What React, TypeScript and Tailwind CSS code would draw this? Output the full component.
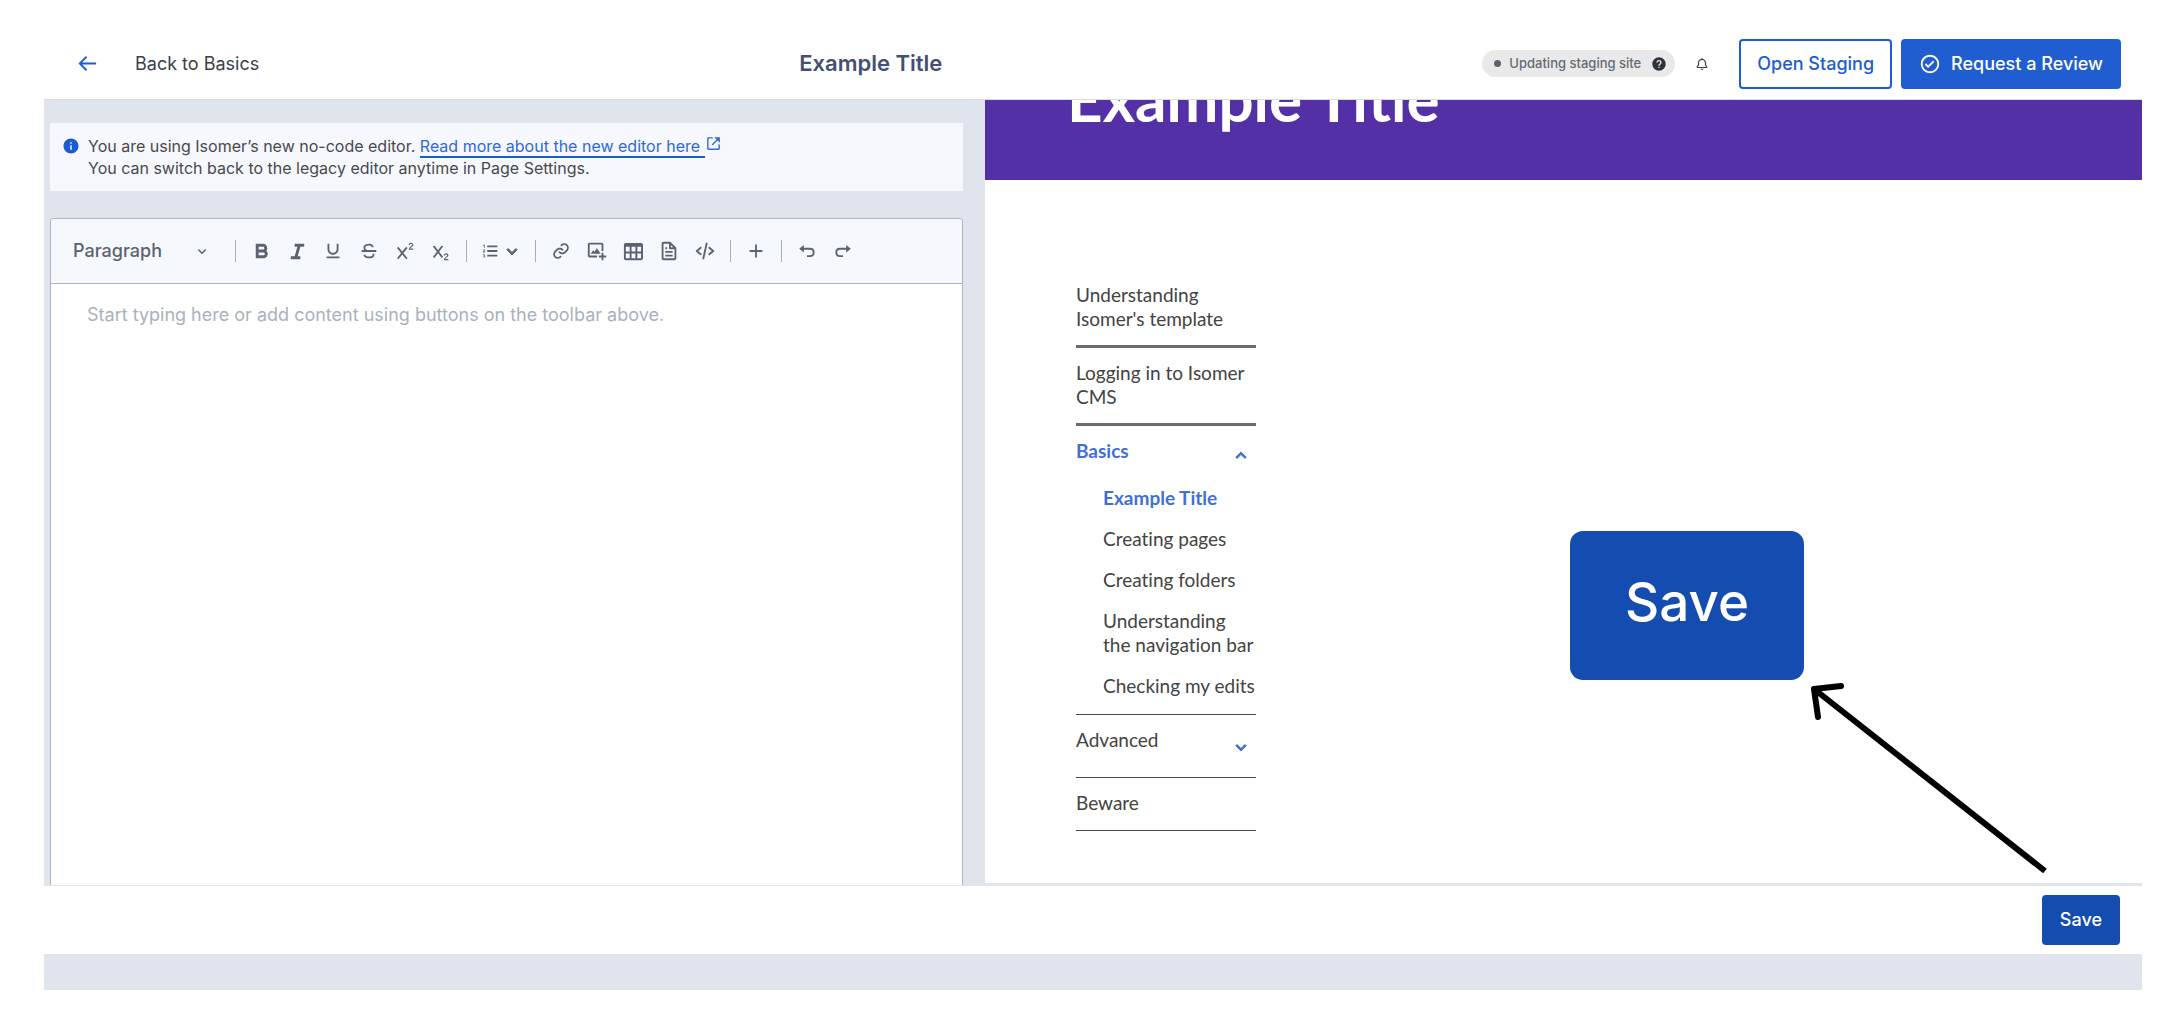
import type { ReactNode } from "react";
import {
  BiArrowBack,
  BiBell,
  BiBold,
  BiCheckCircle,
  BiChevronDown,
  BiChevronUp,
  BiCodeAlt,
  BiFile,
  BiImageAdd,
  BiItalic,
  BiLink,
  BiLinkExternal,
  BiListOl,
  BiPlus,
  BiSolidHelpCircle,
  BiSolidInfoCircle,
  BiStrikethrough,
  BiTable,
  BiUnderline,
} from "react-icons/bi";

function ScriptIcon({ raised }: { raised: boolean }) {
  return (
    <svg viewBox="0 0 24 24" className="size-[22px]" fill="none" stroke="currentColor">
      <path d={raised ? "M4 8l10 12.500M14 8L4 20.500" : "M4 6.500l9.500 12.500M13.500 6.500L4 19"} strokeWidth="2" />
      <path
        d={
          raised
            ? "M16.500 5.500c0-2.500 4-2.500 4-.3C20.500 7 16.800 7.500 16.800 10H21"
            : "M15.500 17c0-2.500 4-2.500 4-.3C19.500 18.500 15.800 19 15.800 21.500H20"
        }
        strokeWidth="1.300"
      />
    </svg>
  );
}

function HistoryIcon({ forward }: { forward: boolean }) {
  return (
    <svg viewBox="0 0 24 24" className="size-[22px]" fill="none" stroke="currentColor">
      <path
        d={
          forward
            ? "M17 9.500H8.500C3.500 9.500 3.500 17.500 8.500 17.500H12"
            : "M7 9.500h8.500C20.500 9.500 20.500 17.500 15.500 17.500H12"
        }
        strokeWidth="2"
      />
      <path
        d={forward ? "M20.500 9.500L15.500 5.500v8z" : "M3.500 9.500L8.500 5.500v8z"}
        fill="currentColor"
        stroke="none"
      />
    </svg>
  );
}

function Tool({ label, children }: { label: string; children: ReactNode }) {
  return (
    <button type="button" aria-label={label} className="flex h-9 w-9 items-center justify-center">
      {children}
    </button>
  );
}

function Divider() {
  return <div className="mx-[7px] h-[22px] w-px bg-[#a9aeb9]" />;
}

function Header() {
  return (
    <header className="flex h-[72px] items-center justify-between border-b border-[#dcdce0] pr-[21px] pl-8">
      <div className="flex items-center gap-9">
        <button type="button" aria-label="Go back" className="text-[#1b5dd1]">
          <BiArrowBack className="size-[23px]" />
        </button>
        <span className="text-lg text-[#3c3f48]">Back to Basics</span>
      </div>
      <h1 className="text-[22px] font-semibold text-[#445072]">Example Title</h1>
      <div className="flex items-center">
        <div className="flex h-[27px] items-center rounded-full bg-[#e9e9e9] pr-2 pl-3 text-[13px] font-medium text-[#636a76]">
          <span className="mr-2 size-[7px] rounded-full bg-[#5d6470]" />
          Updating staging site
          <BiSolidHelpCircle className="ml-2.5 size-4 text-[#2f333b]" />
        </div>
        <button type="button" aria-label="Notifications" className="ml-5 mr-[30px] text-[#3c3f48]">
          <BiBell className="size-3.5" />
        </button>
        <button
          type="button"
          className="h-[50px] rounded border-2 border-[#1b5dd1] px-4 text-lg font-medium text-[#1b5dd1]"
        >
          Open Staging
        </button>
        <button
          type="button"
          className="ml-[9px] flex h-[50px] items-center gap-2.5 rounded bg-[#1f5dd1] px-[18px] text-lg font-medium text-white"
        >
          <BiCheckCircle className="size-[22px]" />
          Request a Review
        </button>
      </div>
    </header>
  );
}

function Callout() {
  return (
    <div className="flex gap-2 bg-[#f6f8fe] py-3 pl-3 text-base leading-[22px] text-[#48494d]">
      <BiSolidInfoCircle className="mt-0.5 size-[18px] text-[#1b5dd1]" />
      <p>
        You are using Isomer’s new no-code editor.{" "}
        <a href="#guide" className="border-b-2 border-[#1b5dd1] text-[#2f69d8]">
          Read more about the new editor here{" "}
        </a>
        <BiLinkExternal className="-mt-1.5 mb-0.5 inline size-[17px] text-[#2f69d8]" />
        <br />
        You can switch back to the legacy editor anytime in Page Settings.
      </p>
    </div>
  );
}

function Toolbar() {
  return (
    <div className="flex h-[65px] items-center border-b border-[#afb4c3] bg-[#f5f9fd] pl-5 text-[#5d6270]">
      <div className="relative flex items-center">
        <select
          aria-label="Text style"
          className="w-[142px] appearance-none bg-transparent pl-0.5 text-lg font-medium"
        >
          <option>Paragraph</option>
        </select>
        <BiChevronDown className="pointer-events-none absolute right-0.5 size-[18px]" />
      </div>
      <div className="ml-4 flex items-center pl-1.5">
        <div className="mr-[7px] h-[22px] w-px bg-[#a9aeb9]" />
        <Tool label="Bold"><BiBold className="size-[23px]" /></Tool>
        <Tool label="Italic"><BiItalic className="size-[23px]" /></Tool>
        <Tool label="Underline"><BiUnderline className="size-[22px]" /></Tool>
        <Tool label="Strikethrough"><BiStrikethrough className="size-[22px]" /></Tool>
        <Tool label="Superscript"><ScriptIcon raised /></Tool>
        <Tool label="Subscript"><ScriptIcon raised={false} /></Tool>
        <Divider />
        <button type="button" aria-label="Lists" className="flex h-9 w-[54px] items-center justify-center">
          <BiListOl className="size-[22px]" />
          <BiChevronDown className="size-[22px] stroke-current stroke-1" />
        </button>
        <Divider />
        <Tool label="Link"><BiLink className="size-[22px]" /></Tool>
        <Tool label="Add image"><BiImageAdd className="size-[22px]" /></Tool>
        <Tool label="Table"><BiTable className="size-[23px]" /></Tool>
        <Tool label="File"><BiFile className="size-[22px]" /></Tool>
        <Tool label="Embed code"><BiCodeAlt className="size-[22px]" /></Tool>
        <Divider />
        <Tool label="Add block"><BiPlus className="size-[22px]" /></Tool>
        <Divider />
        <Tool label="Undo"><HistoryIcon forward={false} /></Tool>
        <Tool label="Redo"><HistoryIcon forward /></Tool>
      </div>
    </div>
  );
}

function Editor() {
  return (
    <section className="flex flex-col bg-[#e0e4ed] pt-[23px] pr-[22px] pl-1.5">
      <Callout />
      <div className="mt-[27px] flex flex-1 flex-col overflow-hidden rounded-t border border-b-0 border-[#afb4c3] bg-white">
        <Toolbar />
        <textarea
          aria-label="Page content"
          placeholder="Start typing here or add content using buttons on the toolbar above."
          className="flex-1 resize-none px-9 pt-[19px] text-lg leading-6 outline-none placeholder:text-[#a9b2bc]"
        />
      </div>
    </section>
  );
}

const pages = [
  "Creating pages",
  "Creating folders",
  "Understanding the navigation bar",
  "Checking my edits",
];

function Preview() {
  return (
    <section className="flex min-w-0 flex-col overflow-hidden border-b-2 border-[#e1e5ec] font-['Lato',sans-serif] [font-variant-ligatures:none]">
      <div className="flex h-20 items-end overflow-hidden bg-[#5430a7] pb-[51px] pl-[82px]">
        <h2 className="text-[62px] leading-[62px] font-bold text-white">Example Title</h2>
      </div>
      <nav className="ml-[91px] w-[180px] pt-[103px] pb-12 text-[19px] leading-6 text-[#434343]">
        <a href="#template" className="block border-b-[3px] border-[#6b6b6b] pb-3.5">
          Understanding Isomer's template
        </a>
        <a href="#login" className="block border-b-[3px] border-[#6b6b6b] pt-[13px] pb-3.5">
          Logging in to Isomer CMS
        </a>
        <div className="border-b border-[#4a4a4a] pb-4">
          <button
            type="button"
            className="flex w-full justify-between pt-[13px] pr-1 font-bold text-[#3f70d6]"
          >
            Basics
            <BiChevronUp className="mt-1.5 size-[22px] stroke-current stroke-1" />
          </button>
          <div className="flex flex-col gap-[17px] pt-[19px] pl-[27px]">
            <a href="#example" className="font-bold text-[#3f70d6]">Example Title</a>
            {pages.map((page) => (
              <a key={page} href="#page">{page}</a>
            ))}
          </div>
        </div>
        <button
          type="button"
          className="flex w-full justify-between border-b border-[#4a4a4a] pt-[13px] pb-[25px] text-left"
        >
          Advanced
          <BiChevronDown className="mt-2 mr-1 -mb-2 size-[22px] stroke-current stroke-1 text-[#3f70d6]" />
        </button>
        <a href="#beware" className="block border-b border-[#4a4a4a] pt-[13px] pb-[15px]">
          Beware
        </a>
      </nav>
    </section>
  );
}

function SaveHint() {
  return (
    <div className="pointer-events-none absolute right-[118px] bottom-[140px] h-[346px] w-[480px]">
      <div className="flex h-[149px] w-[234px] items-center justify-center rounded-[13px] bg-[#154cb0] pb-1.5 text-[53px] font-medium text-white">
        Save
      </div>
      <svg
        viewBox="0 0 480 346"
        className="absolute inset-0 h-full w-full"
        fill="none"
        stroke="#000"
        strokeWidth="6"
        strokeLinejoin="round"
      >
        <path d="M475 340L244 158" />
        <path d="M271 155L244 158L248 186" strokeLinecap="round" />
      </svg>
    </div>
  );
}

export default function App() {
  return (
    <div className="relative flex min-h-screen flex-col bg-white pt-7 pr-[26px] pb-[27px] pl-11 font-['Inter',sans-serif]">
      <Header />
      <main className="grid flex-1 grid-cols-[941fr_1157fr]">
        <Editor />
        <Preview />
      </main>
      <footer className="flex h-[69px] items-center justify-end border-t border-[#e4e5e8] pr-[22px]">
        <button
          type="button"
          className="h-[50px] rounded bg-[#154cb0] px-[18px] text-lg font-medium text-white"
        >
          Save
        </button>
      </footer>
      <div className="h-9 bg-[#e0e4ed]" />
      <SaveHint />
    </div>
  );
}
